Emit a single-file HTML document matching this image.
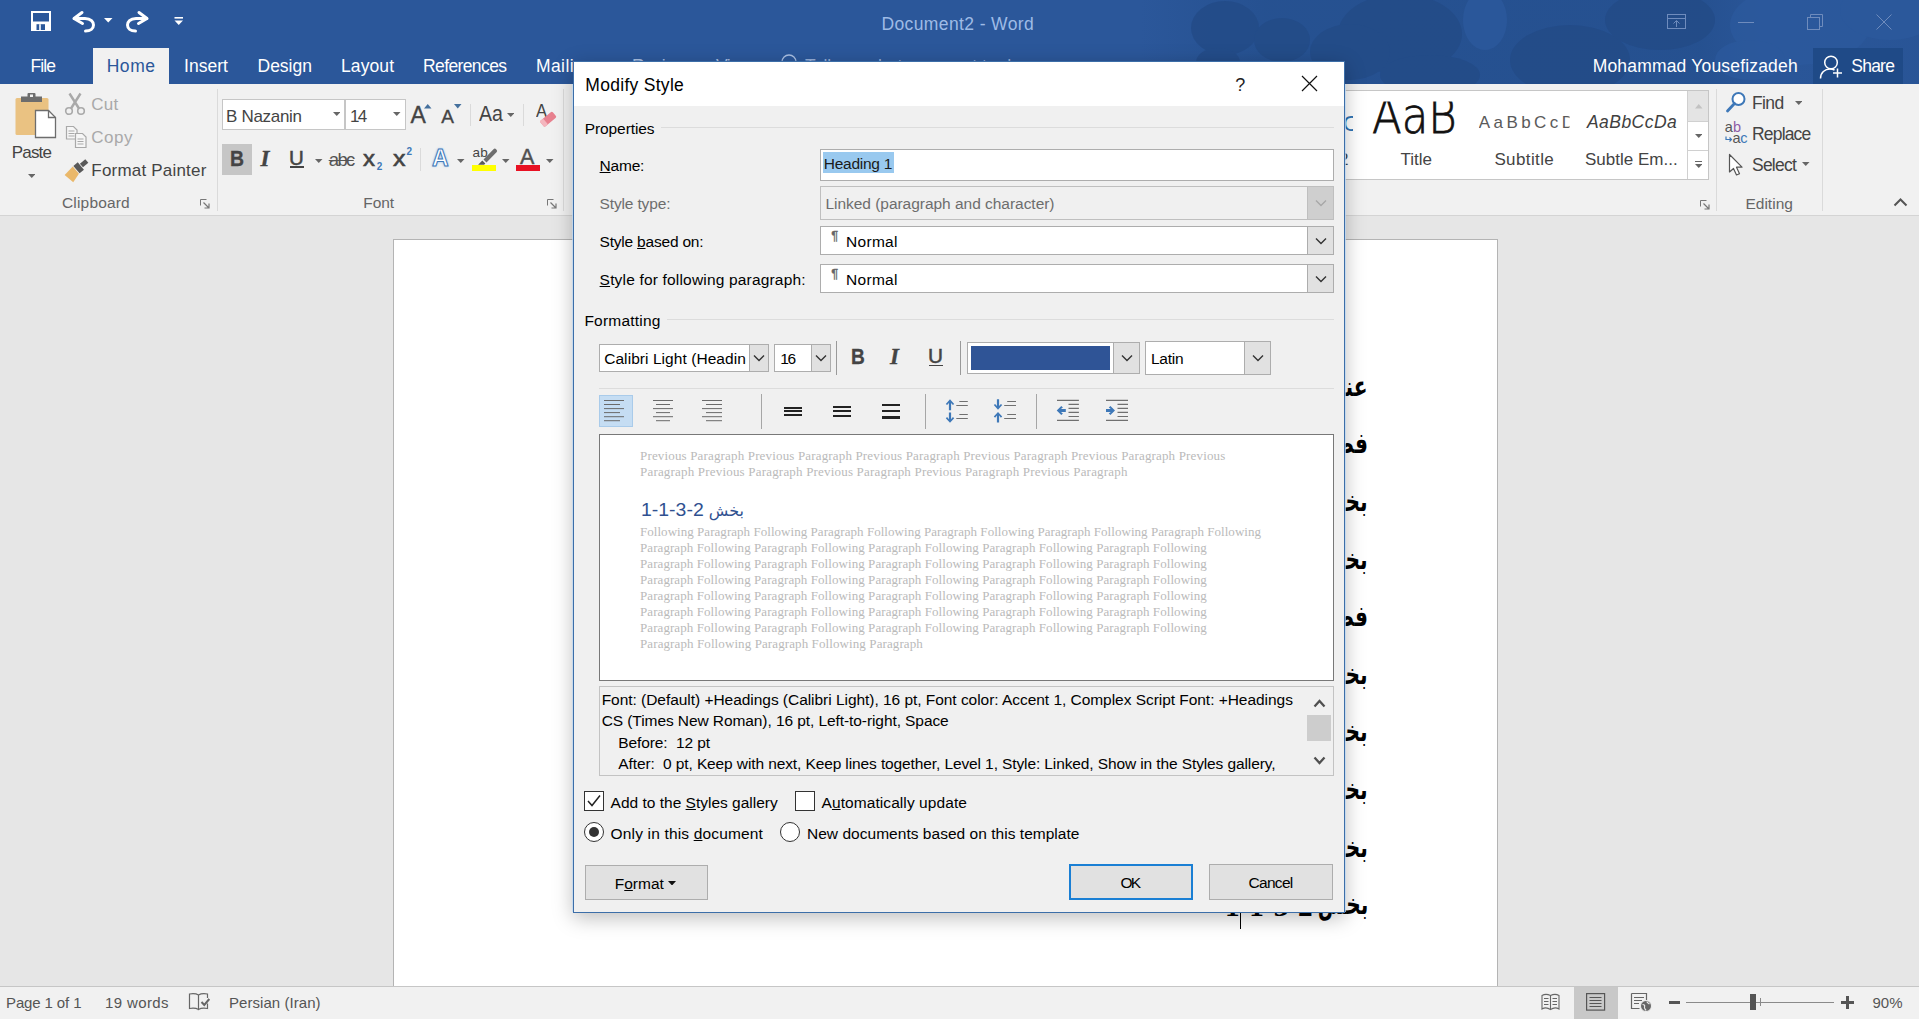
<!DOCTYPE html>
<html lang="en"><head><meta charset="utf-8"><title>Document2 - Word</title>
<style>
html,body{margin:0;padding:0;}
body{width:1919px;height:1019px;overflow:hidden;position:relative;background:#e6e6e6;font-family:"Liberation Sans",sans-serif;}
.b{position:absolute;box-sizing:border-box;display:block;}
.t{position:absolute;white-space:pre;line-height:1;display:block;}
u{text-decoration:underline;text-underline-offset:1px;}
.doc{font-family:'Liberation Serif','DejaVu Sans',sans-serif;font-weight:bold;color:#000;white-space:pre;}
</style></head>
<body>
<div class="b" style="left:0px;top:0px;width:1919px;height:84px;background:#2b579a;"></div>
<svg class="b" style="left:1100px;top:0" width="819" height="84" viewBox="0 0 819 84">
<defs><linearGradient id="cg" x1="0" x2="1" y1="0" y2="0"><stop offset="0" stop-color="#25508f" stop-opacity="0"/><stop offset="0.16" stop-color="#25508f" stop-opacity="0.85"/><stop offset="0.72" stop-color="#25508f" stop-opacity="0.9"/><stop offset="0.8" stop-color="#25508f" stop-opacity="0.15"/><stop offset="1" stop-color="#25508f" stop-opacity="0.35"/></linearGradient></defs>
<rect x="40" y="0" width="779" height="84" fill="url(#cg)"/>
<g fill="#234b87" opacity="0.8">
<ellipse cx="125" cy="28" rx="34" ry="27"/><ellipse cx="182" cy="40" rx="28" ry="22"/><ellipse cx="118" cy="62" rx="22" ry="14"/>
<ellipse cx="300" cy="34" rx="62" ry="40"/><ellipse cx="250" cy="52" rx="40" ry="28"/><ellipse cx="330" cy="75" rx="50" ry="20"/>
<ellipse cx="470" cy="60" rx="60" ry="35"/><ellipse cx="560" cy="20" rx="55" ry="30"/>
</g>
<g fill="#2c5a9e" opacity="0.7">
<ellipse cx="385" cy="20" rx="22" ry="30"/><ellipse cx="700" cy="25" rx="70" ry="40"/><ellipse cx="790" cy="10" rx="50" ry="30"/><ellipse cx="650" cy="60" rx="35" ry="20"/>
</g></svg>
<svg class="b" style="left:30.5px;top:10.5px;" width="20" height="20" viewBox="0 0 20 20"><path d="M1 1h18v18H1z" fill="none" stroke="#fff" stroke-width="2"/><rect x="1" y="10.500" width="18" height="8.500" fill="#fff"/><rect x="5.500" y="13.200" width="8.500" height="5.800" fill="#2b579a"/><rect x="8.200" y="13.200" width="1.600" height="5.800" fill="#fff"/></svg>
<svg class="b" style="left:71px;top:10px;" width="26" height="23" viewBox="0 0 26 23"><path d="M3 8.5 L11 2.5 M3 8.5 L11.5 13.5" stroke="#fff" stroke-width="3" fill="none" stroke-linecap="round"/><path d="M3.5 8.5 H14 C20 8.5 22.5 12 22.5 15 C22.500 18.5 19.500 21 14.500 21" stroke="#fff" stroke-width="3" fill="none" stroke-linecap="round"/></svg>
<svg class="b" style="left:104px;top:18px;" width="9" height="5" viewBox="0 0 9 5"><path d="M0 0h8.500L4.250 4.500z" fill="#fff"/></svg>
<svg class="b" style="left:124px;top:10px;" width="26" height="23" viewBox="0 0 26 23"><g transform="translate(26,0) scale(-1,1)"><path d="M3 8.5 L11 2.5 M3 8.5 L11.5 13.5" stroke="#fff" stroke-width="3" fill="none" stroke-linecap="round"/><path d="M3.5 8.5 H14 C20 8.5 22.5 12 22.5 15 C22.500 18.5 19.500 21 14.500 21" stroke="#fff" stroke-width="3" fill="none" stroke-linecap="round"/></g></svg>
<svg class="b" style="left:174px;top:16px;" width="10" height="10" viewBox="0 0 10 10"><rect x="0.5" y="1" width="8.500" height="1.6" fill="#fff"/><path d="M0.500 4.500h8.500L4.750 9z" fill="#fff"/></svg>
<span class="t" style="left:881.4px;top:16px;font-size:17.5px;color:#9ebbe6;letter-spacing:0.39px;">Document2 - Word</span>
<svg class="b" style="left:1667px;top:14px;" width="19" height="15" viewBox="0 0 19 15"><rect x="0.5" y="0.5" width="18" height="14" fill="none" stroke="#6f8cbd"/><path d="M0.500 4.500h18" stroke="#6f8cbd"/><path d="M9.500 13V7M6.500 9.500l3-3 3 3" stroke="#6f8cbd" fill="none"/></svg>
<div class="b" style="left:1738px;top:22px;width:16px;height:1px;background:#6f8cbd;"></div>
<svg class="b" style="left:1807px;top:14px;" width="16" height="16" viewBox="0 0 16 16"><path d="M3.500 3.500v-3h12v12h-3" fill="none" stroke="#6f8cbd"/><rect x="0.5" y="3.500" width="12" height="12" fill="none" stroke="#6f8cbd"/></svg>
<svg class="b" style="left:1876px;top:14px;" width="16" height="16" viewBox="0 0 16 16"><path d="M0.500 0.500l15 15M15.500 0.500l-15 15" stroke="#6f8cbd" fill="none"/></svg>
<div class="b" style="left:93px;top:48px;width:76px;height:36px;background:#f1f1f1;"></div>
<span class="t" style="left:30.5px;top:58px;font-size:17.5px;color:#fff;letter-spacing:-0.90px;">File</span>
<span class="t" style="left:106.7px;top:58px;font-size:17.5px;color:#2b579a;letter-spacing:0.54px;">Home</span>
<span class="t" style="left:184.0px;top:58px;font-size:17.5px;color:#fff;letter-spacing:0.04px;">Insert</span>
<span class="t" style="left:257.5px;top:58px;font-size:17.5px;color:#fff;">Design</span>
<span class="t" style="left:341.0px;top:58px;font-size:17.5px;color:#fff;letter-spacing:0.09px;">Layout</span>
<span class="t" style="left:423.0px;top:58px;font-size:17.5px;color:#fff;letter-spacing:-0.61px;">References</span>
<span class="t" style="left:536.0px;top:58px;font-size:17.5px;color:#fff;letter-spacing:0.40px;">Mailings</span>
<span class="t" style="left:632.0px;top:58px;font-size:17.5px;color:#a9bfe2;letter-spacing:-0.48px;">Review</span>
<span class="t" style="left:716.0px;top:58px;font-size:17.5px;color:#a9bfe2;letter-spacing:-0.54px;">View</span>
<svg class="b" style="left:780px;top:53px;" width="18" height="22" viewBox="0 0 18 22"><circle cx="9" cy="9" r="7" fill="none" stroke="#a9bfe2" stroke-width="1.3"/><path d="M6.500 15v4h5v-4" fill="none" stroke="#a9bfe2" stroke-width="1.3"/></svg>
<span class="t" style="left:805.0px;top:58px;font-size:17.5px;color:#94aed9;">Tell me what you want to do</span>
<span class="t" style="left:1592.7px;top:58px;font-size:17.5px;color:#fff;letter-spacing:0.18px;">Mohammad Yousefizadeh</span>
<div class="b" style="left:1813px;top:48px;width:90px;height:36px;background:#1f4a87;"></div>
<svg class="b" style="left:1819px;top:54px;" width="26" height="26" viewBox="0 0 26 26"><circle cx="12" cy="8.500" r="6.300" fill="none" stroke="#fff" stroke-width="1.5"/><path d="M1.500 24.500c0-6 4.500-9.500 9.500-9.500 2 0 3.500 0.500 4.500 1" fill="none" stroke="#fff" stroke-width="1.5"/><path d="M18.500 14.500v9M14 19h9" stroke="#fff" stroke-width="1.5"/></svg>
<span class="t" style="left:1851.3px;top:58px;font-size:17.5px;color:#fff;letter-spacing:-0.78px;">Share</span>
<div class="b" style="left:0px;top:84px;width:1919px;height:131px;background:#f1f1f1;"></div>
<div class="b" style="left:0px;top:215px;width:1919px;height:1px;background:#d4d4d4;"></div>
<div class="b" style="left:93px;top:82px;width:76px;height:3px;background:#f1f1f1;"></div>
<div class="b" style="left:0px;top:216px;width:1919px;height:770px;background:#e6e6e6;"></div>
<div class="b" style="left:393px;top:239px;width:1105px;height:748px;background:#fff;border:1px solid #b4b4b4;"></div>
<div class="b" style="left:0px;top:986px;width:1919px;height:33px;background:#f1f1f1;"></div>
<div class="b" style="left:0px;top:986px;width:1919px;height:1px;background:#c6c6c6;"></div>
<span class="t" style="left:6.0px;top:995px;font-size:15px;color:#555;letter-spacing:-0.12px;">Page 1 of 1</span>
<span class="t" style="left:105.0px;top:995px;font-size:15px;color:#555;letter-spacing:0.38px;">19 words</span>
<svg class="b" style="left:188px;top:992px;" width="24" height="20" viewBox="0 0 24 20"><path d="M10.500 17.500c-2.500-1.500-6-1.500-9 -1v-14.500c3-0.500 6.500-0.500 9 1c2.500-1.500 6-1.500 9-1v4M10.500 3v14.500c2.500-1.500 6-1.500 9-1v-5" fill="none" stroke="#666" stroke-width="1.200"/><path d="M13.500 10l2.800 3 5-6" fill="none" stroke="#666" stroke-width="2"/></svg>
<span class="t" style="left:229.0px;top:995px;font-size:15px;color:#555;letter-spacing:0.05px;">Persian (Iran)</span>
<svg class="b" style="left:1541px;top:993px;" width="20" height="18" viewBox="0 0 20 18"><path d="M9.500 2.500v14M9.500 2.500c-3-1.500-6-1.500-8.500 0v13.500c2.500-1.500 5.500-1.500 8.500 0.500c3-2 6-2 8.500-0.500v-13.500c-2.500-1.500-5.500-1.500-8.500 0z" fill="none" stroke="#666" stroke-width="1.1"/><path d="M3 5.500h4.500M3 8.500h4.500M3 11.500h4.500M11.500 5.500h4.500M11.500 8.500h4.500M11.500 11.500h4.500" stroke="#666" stroke-width="1"/></svg>
<div class="b" style="left:1574px;top:987px;width:44px;height:32px;background:#c8c8c8;"></div>
<svg class="b" style="left:1586px;top:993px;" width="20" height="18" viewBox="0 0 20 18"><rect x="0.600" y="0.600" width="18" height="16.500" fill="none" stroke="#555" stroke-width="1.2"/><path d="M3.500 4.500h12M3.500 7.500h12M3.500 10.500h12M3.500 13.500h12" stroke="#555" stroke-width="1.1"/></svg>
<svg class="b" style="left:1630px;top:992px;" width="24" height="20" viewBox="0 0 24 20"><path d="M1.500 1.500h15v9M1.500 1.500v15h8" fill="none" stroke="#666" stroke-width="1.2"/><path d="M4 5.500h10M4 8.500h8M4 11.500h5" stroke="#666" stroke-width="1.1"/><circle cx="16" cy="14" r="5.500" fill="#666" stroke="#f1f1f1" stroke-width="1"/><path d="M12.500 12.500c2 0 2.500 1 2 2.500s1 2 1.500 3.500M17 9.500c0 1.500 1.500 1.500 2.500 2.500" fill="none" stroke="#e8e8e8" stroke-width="1.200"/></svg>
<div class="b" style="left:1669px;top:1001px;width:11px;height:2.5px;background:#555;"></div>
<div class="b" style="left:1686px;top:1002px;width:148px;height:1px;background:#8a8a8a;"></div>
<div class="b" style="left:1760px;top:998px;width:1px;height:8px;background:#8a8a8a;"></div>
<div class="b" style="left:1750px;top:994px;width:6px;height:16px;background:#555;"></div>
<div class="b" style="left:1841px;top:1001px;width:13px;height:2.5px;background:#555;"></div>
<div class="b" style="left:1846.3px;top:995.5px;width:2.5px;height:13px;background:#555;"></div>
<span class="t" style="left:1872.5px;top:995px;font-size:15px;color:#555;letter-spacing:-0.02px;">90%</span>
<svg class="b" style="left:14px;top:92px;" width="44" height="48" viewBox="0 0 44 48"><rect x="1.5" y="6" width="33" height="37" rx="1.5" fill="#eac282"/>
<rect x="7" y="4.500" width="21" height="5.500" fill="#6d6d6d"/><rect x="13.5" y="1" width="8" height="6" rx="1" fill="#6d6d6d"/><rect x="16" y="2.500" width="3" height="2.500" fill="#f1f1f1"/>
<path d="M21.500 18.500h13l7 7v20h-20z" fill="#fff" stroke="#6d6d6d" stroke-width="1.3"/><path d="M34.500 18.500v7h7" fill="none" stroke="#6d6d6d" stroke-width="1.300"/></svg>
<span class="t" style="left:11.7px;top:144px;font-size:17px;color:#444;letter-spacing:-0.80px;">Paste</span>
<svg class="b" style="left:27.5px;top:174px;" width="7.5" height="4" viewBox="0 0 7.5 4"><path d="M0 0h7.5L3.75 4z" fill="#666"/></svg>
<svg class="b" style="left:64px;top:92px;" width="22" height="24" viewBox="0 0 22 24"><path d="M5.500 1.500l9.500 15M16.500 1.500l-9.500 15" stroke="#a9a9a9" stroke-width="2.400" fill="none"/>
<circle cx="5" cy="19" r="3.300" fill="none" stroke="#a9a9a9" stroke-width="1.6"/><circle cx="17" cy="19" r="3.300" fill="none" stroke="#a9a9a9" stroke-width="1.6"/></svg>
<span class="t" style="left:91.3px;top:96px;font-size:17px;color:#a9a9a9;letter-spacing:0.27px;">Cut</span>
<svg class="b" style="left:65px;top:125px;" width="23" height="24" viewBox="0 0 23 24"><path d="M1.500 1.500h7l3.500 3.500v9h-10.500z" fill="#f6f6f6" stroke="#a9a9a9" stroke-width="1.2"/>
<path d="M3.500 6h6M3.500 8.500h6M3.500 11h6" stroke="#a9a9a9" stroke-width="1"/>
<path d="M10.500 8.500h7l3.500 3.500v10.500h-10.500z" fill="#f6f6f6" stroke="#a9a9a9" stroke-width="1.200"/>
<path d="M12.500 14h6M12.500 16.500h6M12.500 19h6" stroke="#a9a9a9" stroke-width="1"/></svg>
<span class="t" style="left:91.3px;top:129px;font-size:17px;color:#a9a9a9;letter-spacing:0.50px;">Copy</span>
<svg class="b" style="left:61px;top:157px;" width="30" height="26" viewBox="0 0 30 26"><g transform="translate(25.8,4) rotate(-40)"><rect x="-7" y="-2.400" width="7" height="4.800" fill="#595959"/><rect x="-13.500" y="-4.800" width="5.700" height="9.600" fill="#595959"/><path d="M-14.300 -4.800L-14.300 4.800L-24 7.500L-26 -3.500z" fill="#eab86a"/></g></svg>
<span class="t" style="left:91.3px;top:162px;font-size:17px;color:#444;letter-spacing:0.20px;">Format Painter</span>
<span class="t" style="left:62.0px;top:195px;font-size:15.5px;color:#666;letter-spacing:0.17px;">Clipboard</span>
<svg class="b" style="left:200px;top:199px;" width="10" height="10" viewBox="0 0 10 10"><path d="M0.500 6.500v-6h6" fill="none" stroke="#777" stroke-width="1"/><path d="M3.500 3.500l5 5M9 4.500v4.500h-4.500" fill="none" stroke="#777" stroke-width="1.2"/></svg>
<div class="b" style="left:217px;top:89px;width:1px;height:122px;background:#dadada;"></div>
<div class="b" style="left:222px;top:99px;width:123px;height:31px;background:#fff;border:1px solid #c6c6c6;"></div>
<div class="b" style="left:345px;top:99px;width:61px;height:31px;background:#fff;border:1px solid #c6c6c6;border-left:1px solid #c6c6c6;"></div>
<span class="t" style="left:226.0px;top:108px;font-size:17px;color:#444;letter-spacing:-0.30px;">B Nazanin</span>
<svg class="b" style="left:332.8px;top:111.6px;" width="7.5" height="4" viewBox="0 0 7.5 4"><path d="M0 0h7.5L3.75 4z" fill="#666"/></svg>
<span class="t" style="left:350.0px;top:108px;font-size:17px;color:#444;letter-spacing:-1.60px;">14</span>
<svg class="b" style="left:393.2px;top:111.6px;" width="7.5" height="4" viewBox="0 0 7.5 4"><path d="M0 0h7.5L3.75 4z" fill="#666"/></svg>
<span class="t" style="left:410.5px;top:104px;font-size:23px;color:#444;-webkit-text-stroke:0.35px #444;">A</span>
<svg class="b" style="left:424px;top:104px;" width="8" height="5" viewBox="0 0 8 5"><path d="M0 4.500h7.500L3.750 0z" fill="#44709d"/></svg>
<span class="t" style="left:441.3px;top:107px;font-size:19px;color:#444;-webkit-text-stroke:0.35px #444;">A</span>
<svg class="b" style="left:453.5px;top:104px;" width="8" height="5" viewBox="0 0 8 5"><path d="M0 0h7.500L3.750 4.500z" fill="#44709d"/></svg>
<div class="b" style="left:470px;top:104px;width:1px;height:22px;background:#dadada;"></div>
<span class="t" style="left:479.3px;top:104px;font-size:21.5px;color:#444;transform:scaleX(0.908);transform-origin:0 0;">Aa</span>
<svg class="b" style="left:506.7px;top:112.5px;" width="7.5" height="4" viewBox="0 0 7.5 4"><path d="M0 0h7.5L3.75 4z" fill="#666"/></svg>
<div class="b" style="left:523px;top:104px;width:1px;height:22px;background:#dadada;"></div>
<span class="t" style="left:535.5px;top:102px;font-size:18px;color:#444;transform:scaleX(0.915);transform-origin:0 0;">A</span>
<svg class="b" style="left:539px;top:110px;" width="18" height="17" viewBox="0 0 18 17"><g transform="rotate(-40 9 9)"><rect x="1" y="5.500" width="16" height="7.500" rx="1.5" fill="#e8818f"/><rect x="1" y="5.500" width="4.500" height="7.500" rx="1" fill="#f4b6be"/></g></svg>
<div class="b" style="left:222px;top:144px;width:30px;height:31px;background:#c6c6c6;"></div>
<span class="t" style="left:230.2px;top:148px;font-size:22.5px;color:#444;font-weight:bold;transform:scaleX(0.862);transform-origin:0 0;-webkit-text-stroke:0.3px #444;">B</span>
<span class="t" style="left:260.5px;top:147px;font-size:23px;color:#444;font-family:'Liberation Serif', serif;font-weight:bold;font-style:italic;-webkit-text-stroke:0.3px #444;">I</span>
<span class="t" style="left:289.0px;top:148px;font-size:20.5px;color:#444;transform:scaleX(0.999);transform-origin:0 0;-webkit-text-stroke:0.5px #444;">U</span>
<div class="b" style="left:289.5px;top:166.3px;width:14px;height:1.6px;background:#444;"></div>
<svg class="b" style="left:315.4px;top:158.5px;" width="7.5" height="4" viewBox="0 0 7.5 4"><path d="M0 0h7.5L3.75 4z" fill="#666"/></svg>
<span class="t" style="left:328.7px;top:151px;font-size:18.5px;color:#555;letter-spacing:-1.60px;text-decoration:line-through;text-decoration-thickness:1px;">abc</span>
<span class="t" style="left:363.0px;top:148px;font-size:21.7px;color:#444;transform:scaleX(1.107);transform-origin:0 0;-webkit-text-stroke:0.6px #444;">x</span>
<span class="t" style="left:376.7px;top:162px;font-size:10px;color:#3e78b8;font-weight:bold;">2</span>
<span class="t" style="left:392.5px;top:148px;font-size:21.7px;color:#444;transform:scaleX(1.153);transform-origin:0 0;-webkit-text-stroke:0.6px #444;">x</span>
<span class="t" style="left:406.5px;top:147px;font-size:10px;color:#3e78b8;font-weight:bold;">2</span>
<div class="b" style="left:420px;top:148px;width:1px;height:23px;background:#dadada;"></div>
<span class="t" style="left:432.0px;top:147px;font-size:23px;color:#fff;font-weight:bold;-webkit-text-stroke:1px #3e78b8;text-shadow:0 0 3px #9cc3ec,0 0 2px #9cc3ec;">A</span>
<svg class="b" style="left:457px;top:158.5px;" width="7.5" height="4" viewBox="0 0 7.5 4"><path d="M0 0h7.5L3.75 4z" fill="#666"/></svg>
<span class="t" style="left:472.4px;top:146px;font-size:13.5px;color:#444;letter-spacing:0.37px;">ab</span>
<svg class="b" style="left:476px;top:146px;" width="22" height="20" viewBox="0 0 22 20"><path d="M7.500 13.500L17.500 3.300a1.800 1.800 0 0 1 2.600 0l0.400 0.400a1.800 1.800 0 0 1 0 2.600L10.500 16.500z" fill="#6e6e6e"/><path d="M6.300 14.600l3 3-1.200 1.200h-6z" fill="#5a5a5a"/></svg>
<div class="b" style="left:472px;top:165px;width:24px;height:5.5px;background:#ffff00;"></div>
<svg class="b" style="left:502px;top:158.5px;" width="7.5" height="4" viewBox="0 0 7.5 4"><path d="M0 0h7.5L3.75 4z" fill="#666"/></svg>
<span class="t" style="left:520.0px;top:147px;font-size:21.5px;color:#505050;-webkit-text-stroke:0.4px #505050;">A</span>
<div class="b" style="left:516px;top:165px;width:24px;height:5.5px;background:#e81123;"></div>
<svg class="b" style="left:546px;top:158.5px;" width="7.5" height="4" viewBox="0 0 7.5 4"><path d="M0 0h7.5L3.75 4z" fill="#666"/></svg>
<span class="t" style="left:363.2px;top:195px;font-size:15.5px;color:#666;letter-spacing:-0.01px;">Font</span>
<svg class="b" style="left:546.5px;top:199px;" width="10" height="10" viewBox="0 0 10 10"><path d="M0.500 6.500v-6h6" fill="none" stroke="#777" stroke-width="1"/><path d="M3.500 3.500l5 5M9 4.500v4.500h-4.500" fill="none" stroke="#777" stroke-width="1.2"/></svg>
<div class="b" style="left:563px;top:89px;width:1px;height:122px;background:#dadada;"></div>
<div class="b" style="left:600px;top:90px;width:1109px;height:90px;background:#fff;border:1px solid #c6c6c6;"></div>
<span class="t" style="left:1294.0px;top:113px;font-size:22.5px;color:#2e74b5;letter-spacing:-1.60px;clip-path:inset(0 4.3px 0 0);">AaBbC</span>
<span class="t" style="left:1281.5px;top:151px;font-size:17px;color:#444;letter-spacing:-1.31px;">Heading 2</span>
<span class="t" style="left:1371.5px;top:92px;font-size:49px;color:#111;font-family:'DejaVu Sans Light', 'DejaVu Sans', sans-serif;font-weight:200;transform:scaleX(0.887);transform-origin:0 0;-webkit-text-stroke:0.75px #111;clip-path:inset(9.5px 0 0 0);">AaB</span>
<span class="t" style="left:1400.6px;top:151px;font-size:17px;color:#444;letter-spacing:-0.05px;">Title</span>
<span class="t" style="left:1478.8px;top:114px;font-size:17px;color:#5a5a5a;letter-spacing:3.43px;clip-path:inset(0 7.9px 0 0);">AaBbCcD</span>
<span class="t" style="left:1494.4px;top:151px;font-size:17px;color:#444;letter-spacing:0.38px;">Subtitle</span>
<span class="t" style="left:1587.0px;top:114px;font-size:17.5px;color:#404040;font-style:italic;letter-spacing:0.45px;">AaBbCcDa</span>
<span class="t" style="left:1585.0px;top:151px;font-size:17px;color:#444;letter-spacing:0.01px;">Subtle Em...</span>
<div class="b" style="left:1688px;top:91px;width:20px;height:31px;background:#e4e4e4;"></div>
<div class="b" style="left:1687px;top:91px;width:1px;height:88px;background:#d0d0d0;"></div>
<div class="b" style="left:1688px;top:121px;width:20px;height:1px;background:#d0d0d0;"></div>
<div class="b" style="left:1688px;top:150px;width:20px;height:1px;background:#d0d0d0;"></div>
<svg class="b" style="left:1694.5px;top:103.5px;" width="8" height="5" viewBox="0 0 8 5"><path d="M0 4.500h7.500L3.750 0z" fill="#c2c2c2"/></svg>
<svg class="b" style="left:1694.5px;top:133.5px;" width="7.5" height="4" viewBox="0 0 7.5 4"><path d="M0 0h7.5L3.75 4z" fill="#666"/></svg>
<div class="b" style="left:1694.5px;top:160.5px;width:7.5px;height:1.3px;background:#666;"></div>
<svg class="b" style="left:1694.5px;top:163.5px;" width="7.5" height="4" viewBox="0 0 7.5 4"><path d="M0 0h7.5L3.75 4z" fill="#666"/></svg>
<svg class="b" style="left:1699.5px;top:199.5px;" width="10" height="10" viewBox="0 0 10 10"><path d="M0.500 6.500v-6h6" fill="none" stroke="#777" stroke-width="1"/><path d="M3.500 3.500l5 5M9 4.500v4.500h-4.500" fill="none" stroke="#777" stroke-width="1.2"/></svg>
<div class="b" style="left:1716px;top:89px;width:1px;height:122px;background:#dadada;"></div>
<svg class="b" style="left:1725px;top:91px;" width="22" height="22" viewBox="0 0 22 22"><circle cx="13.500" cy="8" r="6" fill="#fff" stroke="#3e78b8" stroke-width="2"/><path d="M9.500 12.500l-7 7.500" stroke="#3e78b8" stroke-width="2.800" stroke-linecap="round"/></svg>
<span class="t" style="left:1752.0px;top:95px;font-size:17.5px;color:#444;letter-spacing:-0.62px;">Find</span>
<svg class="b" style="left:1794.5px;top:101px;" width="7.5" height="4" viewBox="0 0 7.5 4"><path d="M0 0h7.5L3.75 4z" fill="#666"/></svg>
<span class="t" style="left:1724.8px;top:120px;font-size:14.5px;color:#555;letter-spacing:0.04px;">a<span style="color:#8e5ba6">b</span></span>
<span class="t" style="left:1732.5px;top:131px;font-size:14.5px;color:#555;letter-spacing:-0.43px;">a<span style="color:#3e78b8">c</span></span>
<svg class="b" style="left:1724.5px;top:136px;" width="8" height="7" viewBox="0 0 8 7"><path d="M1 0.500v3h5.500M4.500 1.500l2 2-2 2" fill="none" stroke="#3e78b8" stroke-width="1.2"/></svg>
<span class="t" style="left:1752.0px;top:126px;font-size:17.5px;color:#444;letter-spacing:-0.82px;">Replace</span>
<svg class="b" style="left:1728px;top:153px;" width="17" height="23" viewBox="0 0 17 23"><path d="M1.500 1.500v17.500l4-3.500 3 6.500 3-1.300-3-6.500h5.500z" fill="#fff" stroke="#555" stroke-width="1.2" stroke-linejoin="round"/></svg>
<span class="t" style="left:1752.0px;top:157px;font-size:17.5px;color:#444;letter-spacing:-0.77px;">Select</span>
<svg class="b" style="left:1802px;top:161.8px;" width="7.5" height="4" viewBox="0 0 7.5 4"><path d="M0 0h7.5L3.75 4z" fill="#666"/></svg>
<span class="t" style="left:1745.4px;top:196px;font-size:15.5px;color:#666;letter-spacing:0.02px;">Editing</span>
<div class="b" style="left:1822px;top:89px;width:1px;height:122px;background:#dadada;"></div>
<svg class="b" style="left:1893px;top:197px;" width="15" height="10" viewBox="0 0 15 10"><path d="M1.500 8.500l6-6 6 6" fill="none" stroke="#555" stroke-width="2"/></svg>
<div class="b doc" dir="rtl" style="right:551px;top:368.7px;font-size:28px;line-height:1.25;transform:scaleX(0.72);transform-origin:100% 50%;">عنوان</div>
<div class="b doc" dir="rtl" style="right:551px;top:426.3px;font-size:28px;line-height:1.25;transform:scaleX(0.72);transform-origin:100% 50%;">فصل 1</div>
<div class="b doc" dir="rtl" style="right:551px;top:484.0px;font-size:28px;line-height:1.25;transform:scaleX(0.72);transform-origin:100% 50%;">بخش 1-1</div>
<div class="b doc" dir="rtl" style="right:551px;top:541.6px;font-size:28px;line-height:1.25;transform:scaleX(0.72);transform-origin:100% 50%;">بخش 2-1</div>
<div class="b doc" dir="rtl" style="right:551px;top:599.2px;font-size:28px;line-height:1.25;transform:scaleX(0.72);transform-origin:100% 50%;">فصل 2</div>
<div class="b doc" dir="rtl" style="right:551px;top:656.8px;font-size:28px;line-height:1.25;transform:scaleX(0.72);transform-origin:100% 50%;">بخش 1-2</div>
<div class="b doc" dir="rtl" style="right:551px;top:714.4px;font-size:28px;line-height:1.25;transform:scaleX(0.72);transform-origin:100% 50%;">بخش 2-2</div>
<div class="b doc" dir="rtl" style="right:551px;top:772.1px;font-size:28px;line-height:1.25;transform:scaleX(0.72);transform-origin:100% 50%;">بخش 3-2</div>
<div class="b doc" dir="rtl" style="right:551px;top:829.7px;font-size:28px;line-height:1.25;transform:scaleX(0.72);transform-origin:100% 50%;">بخش 1-3-2</div>
<div class="b doc" dir="rtl" style="right:551px;top:887.3px;font-size:28px;line-height:1.25;transform:scaleX(0.72);transform-origin:100% 50%;">بخش <span style="display:inline-block;position:relative;top:1.6px;transform:scaleX(1.45);transform-origin:100% 50%">&#x61C;2-3-1-1</span></div>
<div class="b" style="left:1240px;top:905px;width:1px;height:24px;background:#000;"></div>
<div class="b" style="left:573px;top:61px;width:772px;height:852px;background:#f0f0f0;border:1px solid #3c6ea8;box-shadow:0 5px 19px 0 rgba(0,0,0,0.26);"></div>
<div class="b" style="left:572px;top:84px;width:1px;height:828px;background:rgba(190,215,240,0.75);"></div>
<div class="b" style="left:1345px;top:84px;width:1px;height:828px;background:rgba(190,215,240,0.75);"></div>
<div class="b" style="left:574px;top:62px;width:770px;height:44px;background:#fff;"></div>
<span class="t" style="left:585.3px;top:77px;font-size:17.5px;color:#000;letter-spacing:0.29px;">Modify Style</span>
<span class="t" style="left:1235.3px;top:76px;font-size:18px;color:#222;">?</span>
<svg class="b" style="left:1301px;top:75px;" width="17" height="17" viewBox="0 0 17 17"><path d="M1 1l15 15M16 1l-15 15" stroke="#111" stroke-width="1.2" fill="none"/></svg>
<span class="t" style="left:584.7px;top:121px;font-size:15.5px;color:#000;letter-spacing:-0.08px;">Properties</span>
<div class="b" style="left:661px;top:127px;width:673px;height:1px;background:#dcdcdc;"></div>
<span class="t" style="left:599.6px;top:158px;font-size:15.5px;color:#000;letter-spacing:-0.22px;"><u>N</u>ame:</span>
<div class="b" style="left:820px;top:149px;width:514px;height:32px;background:#fff;border:1px solid #adadad;"></div>
<div class="b" style="left:823px;top:152px;width:71px;height:21px;background:#99c9ef;"></div>
<span class="t" style="left:823.8px;top:156px;font-size:15.5px;color:#1a1a1a;letter-spacing:-0.26px;">Heading 1</span>
<span class="t" style="left:599.6px;top:196px;font-size:15.5px;color:#6d6d6d;letter-spacing:-0.15px;">Style type:</span>
<div class="b" style="left:820px;top:186px;width:514px;height:34px;background:#f0f0f0;border:1px solid #bfbfbf;"></div>
<div class="b" style="left:1307px;top:186px;width:27px;height:34px;background:#cfcfcf;border:1px solid #bfbfbf;"></div>
<svg class="b" style="left:1314.5px;top:199.0px;" width="12" height="8" viewBox="0 0 12 8"><path d="M1 1.500l5 5 5-5" fill="none" stroke="#a8a8a8" stroke-width="1.4"/></svg>
<span class="t" style="left:825.4px;top:196px;font-size:15.5px;color:#6d6d6d;letter-spacing:-0.03px;">Linked (paragraph and character)</span>
<span class="t" style="left:599.6px;top:234px;font-size:15.5px;color:#000;letter-spacing:-0.21px;">Style <u>b</u>ased on:</span>
<div class="b" style="left:820px;top:226px;width:514px;height:29px;background:#fff;border:1px solid #adadad;"></div>
<div class="b" style="left:1307px;top:226px;width:27px;height:29px;background:#e1e1e1;border:1px solid #adadad;"></div>
<svg class="b" style="left:1314.5px;top:236.5px;" width="12" height="8" viewBox="0 0 12 8"><path d="M1 1.500l5 5 5-5" fill="none" stroke="#333" stroke-width="1.4"/></svg>
<span class="t" style="left:831.3px;top:229px;font-size:13px;color:#666;-webkit-text-stroke:0.3px #666;">¶</span>
<span class="t" style="left:846.1px;top:234px;font-size:15.5px;color:#000;letter-spacing:0.27px;">Normal</span>
<span class="t" style="left:599.6px;top:272px;font-size:15.5px;color:#000;letter-spacing:0.18px;"><u>S</u>tyle for following paragraph:</span>
<div class="b" style="left:820px;top:264px;width:514px;height:29px;background:#fff;border:1px solid #adadad;"></div>
<div class="b" style="left:1307px;top:264px;width:27px;height:29px;background:#e1e1e1;border:1px solid #adadad;"></div>
<svg class="b" style="left:1314.5px;top:274.5px;" width="12" height="8" viewBox="0 0 12 8"><path d="M1 1.500l5 5 5-5" fill="none" stroke="#333" stroke-width="1.4"/></svg>
<span class="t" style="left:831.3px;top:267px;font-size:13px;color:#666;-webkit-text-stroke:0.3px #666;">¶</span>
<span class="t" style="left:846.1px;top:272px;font-size:15.5px;color:#000;letter-spacing:0.27px;">Normal</span>
<span class="t" style="left:584.4px;top:313px;font-size:15.5px;color:#000;letter-spacing:0.21px;">Formatting</span>
<div class="b" style="left:667px;top:319px;width:667px;height:1px;background:#dcdcdc;"></div>
<div class="b" style="left:599px;top:344px;width:170px;height:28px;background:#fff;border:1px solid #adadad;"></div>
<div class="b" style="left:749px;top:344px;width:20px;height:28px;background:#e1e1e1;border:1px solid #adadad;"></div>
<svg class="b" style="left:753.0px;top:354.0px;" width="12" height="8" viewBox="0 0 12 8"><path d="M1 1.500l5 5 5-5" fill="none" stroke="#333" stroke-width="1.4"/></svg>
<span class="t" style="left:604.2px;top:351px;font-size:15.5px;color:#000;letter-spacing:0.06px;">Calibri Light (Headin</span>
<div class="b" style="left:774px;top:344px;width:57px;height:28px;background:#fff;border:1px solid #adadad;"></div>
<div class="b" style="left:811px;top:344px;width:20px;height:28px;background:#e1e1e1;border:1px solid #adadad;"></div>
<svg class="b" style="left:815.0px;top:354.0px;" width="12" height="8" viewBox="0 0 12 8"><path d="M1 1.500l5 5 5-5" fill="none" stroke="#333" stroke-width="1.4"/></svg>
<span class="t" style="left:780.2px;top:351px;font-size:15.5px;color:#000;letter-spacing:-1.20px;">16</span>
<div class="b" style="left:836px;top:341px;width:1px;height:34px;background:#9a9a9a;"></div>
<span class="t" style="left:851.1px;top:346px;font-size:22.5px;color:#444;font-weight:bold;transform:scaleX(0.849);transform-origin:0 0;-webkit-text-stroke:0.3px #444;">B</span>
<span class="t" style="left:890.0px;top:345px;font-size:23px;color:#444;font-family:'Liberation Serif', serif;font-weight:bold;font-style:italic;-webkit-text-stroke:0.3px #444;">I</span>
<span class="t" style="left:928.0px;top:346px;font-size:20.5px;color:#444;transform:scaleX(1.013);transform-origin:0 0;-webkit-text-stroke:0.5px #444;">U</span>
<div class="b" style="left:928.5px;top:364.8px;width:14px;height:1.5px;background:#444;"></div>
<div class="b" style="left:960px;top:341px;width:1px;height:34px;background:#9a9a9a;"></div>
<div class="b" style="left:967px;top:342px;width:173px;height:32px;background:#fff;border:1px solid #adadad;"></div>
<div class="b" style="left:1113px;top:342px;width:27px;height:32px;background:#e1e1e1;border:1px solid #adadad;"></div>
<svg class="b" style="left:1120.5px;top:354.0px;" width="12" height="8" viewBox="0 0 12 8"><path d="M1 1.500l5 5 5-5" fill="none" stroke="#333" stroke-width="1.4"/></svg>
<div class="b" style="left:971px;top:346px;width:139px;height:24px;background:#2f5496;"></div>
<div class="b" style="left:1145px;top:341px;width:126px;height:34px;background:#fff;border:1px solid #adadad;"></div>
<div class="b" style="left:1244px;top:341px;width:27px;height:34px;background:#e1e1e1;border:1px solid #adadad;"></div>
<svg class="b" style="left:1251.5px;top:354.0px;" width="12" height="8" viewBox="0 0 12 8"><path d="M1 1.500l5 5 5-5" fill="none" stroke="#333" stroke-width="1.4"/></svg>
<span class="t" style="left:1151.0px;top:351px;font-size:15.5px;color:#000;letter-spacing:-0.26px;">Latin</span>
<div class="b" style="left:599px;top:388px;width:735px;height:1px;background:#dcdcdc;"></div>
<div class="b" style="left:599px;top:395px;width:34px;height:32px;background:#c5ddf3;border:1px solid #a9cbea;"></div>
<svg class="b" style="left:604px;top:400px;" width="22" height="22" viewBox="0 0 22 22"><rect x="0" y="0.0" width="20" height="1" fill="#6a6a6a"/><rect x="0" y="4.0" width="16" height="1" fill="#6a6a6a"/><rect x="0" y="8.1" width="20" height="1" fill="#6a6a6a"/><rect x="0" y="12.1" width="16" height="1" fill="#6a6a6a"/><rect x="0" y="16.2" width="20" height="1" fill="#6a6a6a"/><rect x="0" y="20.2" width="16" height="1" fill="#6a6a6a"/></svg>
<svg class="b" style="left:653px;top:400px;" width="22" height="22" viewBox="0 0 22 22"><rect x="0" y="0.0" width="20" height="1" fill="#6a6a6a"/><rect x="3" y="4.0" width="14" height="1" fill="#6a6a6a"/><rect x="0" y="8.1" width="20" height="1" fill="#6a6a6a"/><rect x="3" y="12.1" width="14" height="1" fill="#6a6a6a"/><rect x="0" y="16.2" width="20" height="1" fill="#6a6a6a"/><rect x="3" y="20.2" width="14" height="1" fill="#6a6a6a"/></svg>
<svg class="b" style="left:702px;top:400px;" width="22" height="22" viewBox="0 0 22 22"><rect x="0" y="0.0" width="20" height="1" fill="#6a6a6a"/><rect x="4" y="4.0" width="16" height="1" fill="#6a6a6a"/><rect x="0" y="8.1" width="20" height="1" fill="#6a6a6a"/><rect x="4" y="12.1" width="16" height="1" fill="#6a6a6a"/><rect x="0" y="16.2" width="20" height="1" fill="#6a6a6a"/><rect x="4" y="20.2" width="16" height="1" fill="#6a6a6a"/></svg>
<div class="b" style="left:761px;top:394px;width:1px;height:35px;background:#a6a6a6;"></div>
<div class="b" style="left:783.7px;top:406.6px;width:18.5px;height:2.2px;background:#222;"></div>
<div class="b" style="left:783.7px;top:410.2px;width:18.5px;height:2.2px;background:#222;"></div>
<div class="b" style="left:783.7px;top:413.5px;width:18.5px;height:2.2px;background:#222;"></div>
<div class="b" style="left:832.7px;top:405.7px;width:18.5px;height:2.2px;background:#222;"></div>
<div class="b" style="left:832.7px;top:410.2px;width:18.5px;height:2.2px;background:#222;"></div>
<div class="b" style="left:832.7px;top:414.9px;width:18.5px;height:2.2px;background:#222;"></div>
<div class="b" style="left:881.7px;top:404.3px;width:18.5px;height:2.2px;background:#222;"></div>
<div class="b" style="left:881.7px;top:410.2px;width:18.5px;height:2.2px;background:#222;"></div>
<div class="b" style="left:881.7px;top:416.4px;width:18.5px;height:2.2px;background:#222;"></div>
<div class="b" style="left:925px;top:394px;width:1px;height:35px;background:#a6a6a6;"></div>
<svg class="b" style="left:944px;top:398px;" width="26" height="27" viewBox="0 0 26 27"><path d="M6 1.3L10.2 5.8999999999999995L8.899999999999999 7.1L7.1 4.9L7.1 12.2L4.9 12.2L4.9 4.9L3.0999999999999996 7.1L1.7999999999999998 5.8999999999999995z" fill="#3e78b8"/><path d="M6 24.8L10.2 20.200000000000003L8.899999999999999 19.0L7.1 21.2L7.1 14.4L4.9 14.4L4.9 21.2L3.0999999999999996 19.0L1.7999999999999998 20.200000000000003z" fill="#3e78b8"/><path d="M15.300 3.500h8.500M12.300 7.500h11.500M15.300 16.500h8.500M12.300 20.500h11.500" stroke="#707070" stroke-width="1.100"/></svg>
<svg class="b" style="left:992px;top:398px;" width="26" height="27" viewBox="0 0 26 27"><path d="M6 11.7L10.2 7.1L8.899999999999999 5.8999999999999995L7.1 8.1L7.1 1.3L4.9 1.3L4.9 8.1L3.0999999999999996 5.8999999999999995L1.7999999999999998 7.1z" fill="#3e78b8"/><path d="M6 13.9L10.2 18.5L8.899999999999999 19.7L7.1 17.5L7.1 24.6L4.9 24.6L4.9 17.5L3.0999999999999996 19.7L1.7999999999999998 18.5z" fill="#3e78b8"/><path d="M15.200 3.500h8.800M12.200 7.500h11.800M15.200 16.500h8.800M12.200 20.500h11.800" stroke="#707070" stroke-width="1.100"/></svg>
<div class="b" style="left:1036px;top:394px;width:1px;height:35px;background:#a6a6a6;"></div>
<svg class="b" style="left:1055px;top:398px;" width="26" height="25" viewBox="0 0 26 25"><path d="M1.7 12.5L6.3 8.1L7.8999999999999995 9.4L5.9 11.0L10.8 11.0L10.8 14.0L5.9 14.0L7.8999999999999995 15.599999999999998L6.3 16.9z" fill="#3e78b8"/><path d="M2 2.400h21.900M2 22.400h21.900M13.500 6.400h10.400M13.500 10.400h10.400M13.500 14.400h10.400M13.500 18.500h10.400" stroke="#707070" stroke-width="1.100"/></svg>
<svg class="b" style="left:1104px;top:398px;" width="26" height="25" viewBox="0 0 26 25"><path d="M11 12.5L6.4 8.1L4.800000000000001 9.4L6.8 11.0L2 11.0L2 14.0L6.8 14.0L4.800000000000001 15.599999999999998L6.4 16.9z" fill="#3e78b8"/><path d="M2 2.400h22M2 22.400h22M13.500 6.400h10.500M13.500 10.400h10.500M13.500 14.400h10.500M13.500 18.500h10.500" stroke="#707070" stroke-width="1.100"/></svg>
<div class="b" style="left:599px;top:434px;width:735px;height:247px;background:#fff;border:1px solid #787878;"></div>
<span class="t" style="left:640.0px;top:449px;font-size:13px;color:#bababa;font-family:'Liberation Serif', serif;letter-spacing:0.16px;">Previous Paragraph Previous Paragraph Previous Paragraph Previous Paragraph Previous Paragraph Previous</span>
<span class="t" style="left:640.0px;top:465px;font-size:13px;color:#bababa;font-family:'Liberation Serif', serif;letter-spacing:0.19px;">Paragraph Previous Paragraph Previous Paragraph Previous Paragraph Previous Paragraph</span>
<div class="b" dir="rtl" style="left:630px;top:498px;width:114px;font:18.5px/1.3 'Liberation Sans','DejaVu Sans',sans-serif;color:#2f5090;white-space:pre;text-align:right;"><span style="font-size:16px">بخش</span> <span style="display:inline-block;transform:scaleX(1.05);transform-origin:100% 50%">&#x61C;2-3-1-1</span></div>
<span class="t" style="left:640.0px;top:525px;font-size:13px;color:#bababa;font-family:'Liberation Serif', serif;letter-spacing:0.04px;">Following Paragraph Following Paragraph Following Paragraph Following Paragraph Following Paragraph Following</span>
<span class="t" style="left:640.0px;top:541px;font-size:13px;color:#bababa;font-family:'Liberation Serif', serif;letter-spacing:0.07px;">Paragraph Following Paragraph Following Paragraph Following Paragraph Following Paragraph Following</span>
<span class="t" style="left:640.0px;top:557px;font-size:13px;color:#bababa;font-family:'Liberation Serif', serif;letter-spacing:0.07px;">Paragraph Following Paragraph Following Paragraph Following Paragraph Following Paragraph Following</span>
<span class="t" style="left:640.0px;top:573px;font-size:13px;color:#bababa;font-family:'Liberation Serif', serif;letter-spacing:0.07px;">Paragraph Following Paragraph Following Paragraph Following Paragraph Following Paragraph Following</span>
<span class="t" style="left:640.0px;top:589px;font-size:13px;color:#bababa;font-family:'Liberation Serif', serif;letter-spacing:0.07px;">Paragraph Following Paragraph Following Paragraph Following Paragraph Following Paragraph Following</span>
<span class="t" style="left:640.0px;top:605px;font-size:13px;color:#bababa;font-family:'Liberation Serif', serif;letter-spacing:0.07px;">Paragraph Following Paragraph Following Paragraph Following Paragraph Following Paragraph Following</span>
<span class="t" style="left:640.0px;top:621px;font-size:13px;color:#bababa;font-family:'Liberation Serif', serif;letter-spacing:0.07px;">Paragraph Following Paragraph Following Paragraph Following Paragraph Following Paragraph Following</span>
<span class="t" style="left:640.0px;top:637px;font-size:13px;color:#bababa;font-family:'Liberation Serif', serif;letter-spacing:0.10px;">Paragraph Following Paragraph Following Paragraph</span>
<div class="b" style="left:599px;top:686px;width:735px;height:90px;background:#f0f0f0;border:1px solid #c3c3c3;"></div>
<span class="t" style="left:601.7px;top:692px;font-size:15.5px;color:#000;letter-spacing:-0.04px;">Font: (Default) +Headings (Calibri Light), 16 pt, Font color: Accent 1, Complex Script Font: +Headings</span>
<span class="t" style="left:601.7px;top:713px;font-size:15.5px;color:#000;letter-spacing:-0.08px;">CS (Times New Roman), 16 pt, Left-to-right, Space</span>
<span class="t" style="left:618.3px;top:735px;font-size:15.5px;color:#000;letter-spacing:-0.10px;">Before:  12 pt</span>
<span class="t" style="left:618.3px;top:756px;font-size:15.5px;color:#000;letter-spacing:-0.11px;">After:  0 pt, Keep with next, Keep lines together, Level 1, Style: Linked, Show in the Styles gallery,</span>
<div class="b" style="left:1306px;top:687px;width:26px;height:88px;background:#f0f0f0;"></div>
<svg class="b" style="left:1313px;top:698px;" width="13" height="11" viewBox="0 0 13 11"><path d="M1.500 8.500l5-5.500 5 5.500" fill="none" stroke="#505050" stroke-width="2.300"/></svg>
<div class="b" style="left:1307px;top:715px;width:24px;height:26px;background:#cdcdcd;"></div>
<svg class="b" style="left:1313px;top:755px;" width="13" height="11" viewBox="0 0 13 11"><path d="M1.500 2.500l5 5.500 5-5.500" fill="none" stroke="#505050" stroke-width="2.300"/></svg>
<div class="b" style="left:584px;top:791px;width:20px;height:20px;background:#fff;border:1px solid #333;"></div>
<svg class="b" style="left:586px;top:794px;" width="16" height="14" viewBox="0 0 16 14"><path d="M2 7l4 4.500 8-10" fill="none" stroke="#222" stroke-width="1.500"/></svg>
<span class="t" style="left:610.6px;top:795px;font-size:15.5px;color:#000;">Add to the <u>S</u>tyles gallery</span>
<div class="b" style="left:795px;top:791px;width:20px;height:20px;background:#fff;border:1px solid #333;"></div>
<span class="t" style="left:821.5px;top:795px;font-size:15.5px;color:#000;letter-spacing:0.08px;">A<u>u</u>tomatically update</span>
<div class="b" style="left:584px;top:822px;width:20px;height:20px;background:#fff;border:1px solid #333;border-radius:50%;"></div>
<div class="b" style="left:589px;top:827px;width:10px;height:10px;background:#333;border-radius:50%;"></div>
<span class="t" style="left:610.6px;top:826px;font-size:15.5px;color:#000;letter-spacing:0.16px;">Only in this <u>d</u>ocument</span>
<div class="b" style="left:780px;top:822px;width:20px;height:20px;background:#fff;border:1px solid #333;border-radius:50%;"></div>
<span class="t" style="left:807.0px;top:826px;font-size:15.5px;color:#000;letter-spacing:0.03px;">New documents based on this template</span>
<div class="b" style="left:585px;top:865px;width:123px;height:35px;background:#e1e1e1;border:1px solid #adadad;"></div>
<span class="t" style="left:614.8px;top:876px;font-size:15.5px;color:#000;letter-spacing:-0.02px;">F<u>o</u>rmat</span>
<svg class="b" style="left:667.5px;top:880.5px;" width="8" height="4.5" viewBox="0 0 8 4.5"><path d="M0 0h8L4 4.500z" fill="#111"/></svg>
<div class="b" style="left:1069px;top:864px;width:124px;height:36px;background:#e1e1e1;border:2px solid #1a7fd4;"></div>
<span class="t" style="left:1120.4px;top:875px;font-size:15.5px;color:#000;letter-spacing:-1.60px;">OK</span>
<div class="b" style="left:1209px;top:864px;width:124px;height:36px;background:#e1e1e1;border:1px solid #adadad;"></div>
<span class="t" style="left:1248.5px;top:875px;font-size:15.5px;color:#000;letter-spacing:-0.69px;">Cancel</span>
</body></html>
